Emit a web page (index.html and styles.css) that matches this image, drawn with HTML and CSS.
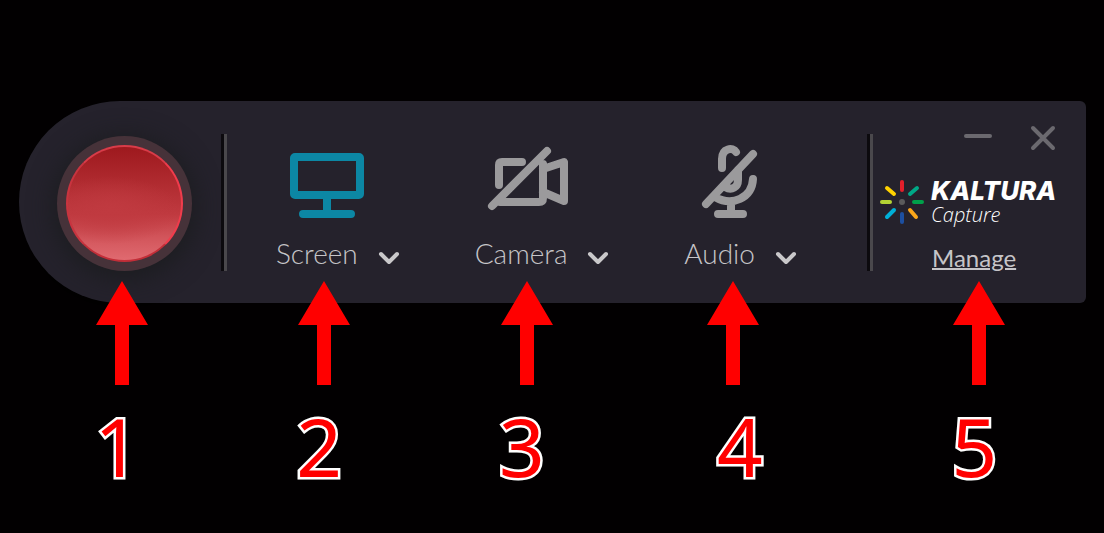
FILE: index.html
```html
<!DOCTYPE html>
<html lang="en">
<head>
<meta charset="utf-8">
<meta name="viewport" content="width=device-width, initial-scale=1">
<title>Kaltura Capture</title>
<link rel="stylesheet" href="styles.css">
</head>
<body>
<main class="stage">
  <section class="recorder" aria-label="Recorder">
    <div class="record-area">
      <button class="record" type="button" aria-label="Record"><span class="record-face"></span></button>
    </div>
    <div class="divider"></div>
    <div class="sources">
      <div class="source">
        <button class="toggle toggle-on" type="button" aria-label="Toggle screen">
          <svg class="icon" viewBox="0 0 80 76"><rect x="7" y="13" width="66" height="38" rx="1"/><path d="M40 51V70M16 70H64"/></svg>
        </button>
        <button class="picker" type="button" aria-haspopup="true">Screen
          <svg class="chevron" viewBox="0 0 22 14"><path d="M3 3L11 11L19 3"/></svg>
        </button>
      </div>
      <div class="source">
        <button class="toggle" type="button" aria-label="Toggle camera">
          <svg class="icon" viewBox="3 0 80 76"><path d="M4 62L59 7M11 41V21Q11 18 14 18H34M12 58H51Q55 58 55 54V20M55 25L76 18V57L55 48"/></svg>
        </button>
        <button class="picker" type="button" aria-haspopup="true">Camera
          <svg class="chevron" viewBox="0 0 22 14"><path d="M3 3L11 11L19 3"/></svg>
        </button>
      </div>
      <div class="source">
        <button class="toggle" type="button" aria-label="Toggle audio">
          <svg class="icon" viewBox="0 0 80 76"><path d="M16 60L63 10M32 24V15C32 4 43 3 46 8M48 26V36C48 43 42 47 35 43M63 35C62 54 42 63 25 53M41 58V70M28 70H53"/></svg>
        </button>
        <button class="picker" type="button" aria-haspopup="true">Audio
          <svg class="chevron" viewBox="0 0 22 14"><path d="M3 3L11 11L19 3"/></svg>
        </button>
      </div>
    </div>
    <div class="divider"></div>
    <div class="side">
      <div class="window-controls">
        <button class="window-button" type="button" aria-label="Minimize"><svg class="minimize" viewBox="0 0 28 26"><path d="M2 11H26"/></svg></button>
        <button class="window-button" type="button" aria-label="Close"><svg class="close" viewBox="0 0 26 26"><path d="M3 3L23 23M23 3L3 23"/></svg></button>
      </div>
      <div class="brand">
        <svg class="burst" viewBox="0 0 46 46" aria-hidden="true">
          <path stroke="#e31f2b" d="M23 3V11"/>
          <path stroke="#00a887" d="M31 15L38 9"/>
          <path stroke="#00a04a" d="M35 23H43"/>
          <path stroke="#faa61a" d="M31 31L37 38"/>
          <path stroke="#1d4fa0" d="M23 35V43"/>
          <path stroke="#00b0d8" d="M15 31L8 38"/>
          <path stroke="#b4d334" d="M3 23H11"/>
          <path stroke="#ffd200" d="M15 15L8 9"/>
          <circle cx="23" cy="23" r="3" fill="#5b5b5c"/>
        </svg>
        <div class="brand-text"><span class="brand-name">KALTURA</span><span class="brand-product">Capture</span></div>
      </div>
      <a class="manage" href="#">Manage</a>
    </div>
    <div class="callout callout-record"><svg class="arrow" viewBox="0 0 52 104"><path d="M26 0L52 44H33V104H19V44H0Z"/></svg><span class="number">1</span></div>
    <div class="callout callout-screen"><svg class="arrow" viewBox="0 0 52 104"><path d="M26 0L52 44H33V104H19V44H0Z"/></svg><span class="number">2</span></div>
    <div class="callout callout-camera"><svg class="arrow" viewBox="0 0 52 104"><path d="M26 0L52 44H33V104H19V44H0Z"/></svg><span class="number">3</span></div>
    <div class="callout callout-audio"><svg class="arrow" viewBox="0 0 52 104"><path d="M26 0L52 44H33V104H19V44H0Z"/></svg><span class="number">4</span></div>
    <div class="callout callout-manage"><svg class="arrow" viewBox="0 0 52 104"><path d="M26 0L52 44H33V104H19V44H0Z"/></svg><span class="number">5</span></div>
  </section>
</main>
</body>
</html>
```
FILE: styles.css
```css
* {
  box-sizing: border-box;
}

body {
  margin: 0;
  background: #020001;
  font-family: Lato, "Liberation Sans", sans-serif;
}

button {
  padding: 0;
  border: 0;
  background: none;
  color: inherit;
  font: inherit;
  cursor: pointer;
}

svg {
  display: block;
  overflow: visible;
  fill: none;
  stroke-linecap: round;
  stroke-linejoin: round;
}

.stage {
  min-height: 100vh;
  padding: 101px 18px 0 19px;
}

.recorder {
  position: relative;
  display: flex;
  border-radius: 101px 6px 6px 101px;
  background: #25222c;
  color: #c6c5c8;
}

.record-area {
  display: flex;
  align-items: center;
  padding: 2px 29px 0 38px;
}

.record {
  display: grid;
  width: 135px;
  height: 135px;
  padding: 9px;
  border-radius: 50%;
  background: #463239;
  box-shadow: 0 4px 24px 4px #1c1d20;
}

.record-face {
  border: 2px solid;
  border-radius: 50%;
  border-color: #d93c49 #f03c4c #c22e38 #c8343f;
  background:
    radial-gradient(ellipse 60% 30% at 38% 56%, #c03a40 0%, transparent 100%),
    linear-gradient(#9e191e, #c03a40 60%, #d2555b 80%, #e06a70);
}

.divider {
  flex: none;
  width: 6px;
  margin: 33px 0 32px;
  border-right: 3px solid #4a484c;
  border-left: 3px solid #0c0a0e;
}

.sources {
  display: flex;
  flex: 1;
  justify-content: space-between;
  padding: 43px 70px 36px 49px;
}

.source {
  display: flex;
  flex-direction: column;
  align-items: center;
  gap: 19px;
}

.toggle {
  margin-right: 22px;
  stroke: #9b9a9c;
}

.toggle-on {
  stroke: #0c87a4;
}

.icon {
  width: 80px;
  height: 76px;
  stroke-width: 8px;
}

.picker {
  display: flex;
  gap: 20px;
  font-size: 28px;
  font-weight: 300;
  line-height: 28px;
}

.chevron {
  width: 22px;
  height: 14px;
  margin-top: 12px;
  stroke: #c9c8ca;
  stroke-width: 4px;
}

.side {
  display: flex;
  flex-direction: column;
  width: 213px;
  padding: 24px 0 0 6px;
}

.window-controls {
  display: flex;
  justify-content: flex-end;
  gap: 38px;
  padding-right: 30px;
  stroke: #6b696f;
  stroke-width: 4px;
}

.minimize {
  width: 28px;
  height: 26px;
}

.close {
  width: 26px;
  height: 26px;
}

.brand {
  display: flex;
  gap: 6px;
  margin-top: 28px;
}

.burst {
  width: 46px;
  height: 46px;
  stroke-width: 4px;
}

.brand-text {
  display: flex;
  flex-direction: column;
  color: #ffffff;
  font-style: italic;
}

.brand-name {
  font-family: Inter, "Open Sans", sans-serif;
  font-size: 26px;
  font-weight: 800;
  line-height: 24px;
}

.brand-product {
  font-family: "Open Sans", "Noto Sans", sans-serif;
  font-size: 20px;
  font-weight: 300;
  line-height: 24px;
}

.manage {
  margin: 18px 0 0 53px;
  color: #c6c5c8;
  font-size: 24px;
  line-height: 26px;
  text-decoration-thickness: 2px;
}

.callout {
  position: absolute;
  top: 180px;
  display: flex;
  flex-direction: column;
  align-items: center;
  width: 80px;
  margin-left: -40px;
  pointer-events: none;
}

.callout-record {
  left: 9.7%;
}

.callout-screen {
  left: 28.6%;
}

.callout-camera {
  left: 47.6%;
}

.callout-audio {
  left: 66.9%;
}

.callout-manage {
  left: 90%;
}

.arrow {
  width: 52px;
  height: 104px;
  fill: #ff0000;
}

.number {
  margin-top: 14px;
  padding-right: 10px;
  color: #ff0000;
  font-family: "Noto Sans", "Open Sans", sans-serif;
  font-size: 80px;
  line-height: 94px;
  -webkit-text-stroke: 5px #ffffff;
  paint-order: stroke fill;
}

.callout-audio .number {
  padding: 0 0 0 14px;
}
```
